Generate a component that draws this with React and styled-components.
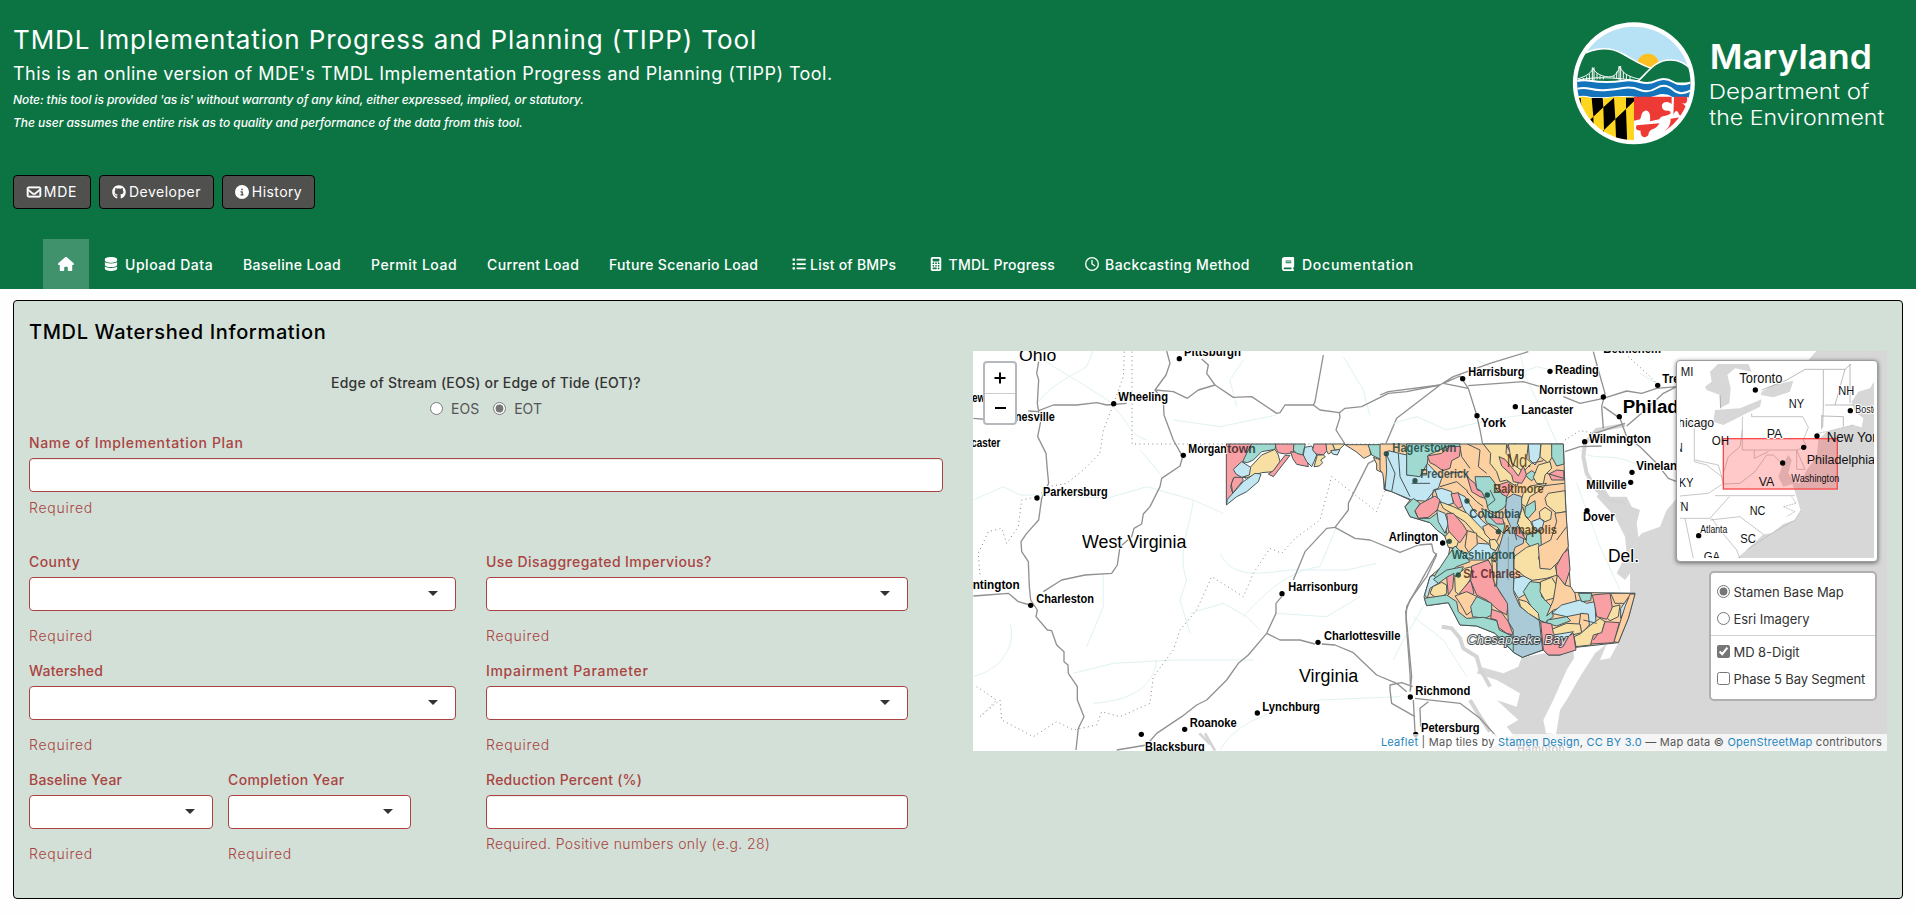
import React from "react";
import styled, { createGlobalStyle } from "styled-components";
import { FaRegEnvelope, FaGithub, FaCircleInfo, FaHouse, FaDatabase, FaListUl, FaCalculator, FaRegClock, FaBook } from "react-icons/fa6";

const GlobalStyle = createGlobalStyle`
  *, *::before, *::after { box-sizing: border-box; }
  body { margin: 0; background: #fefefe; font-family: Inter, "Open Sans", "Liberation Sans", sans-serif; font-size: 14px; color: #2c3e50; overflow: hidden; }
`;

const Page = styled.div`
  height: 915px;
  display: flex;
  flex-direction: column;
`;
const Header = styled.header`
  height: 289px;
  background: #0c7443;
  color: #fff;
  flex: none;
`;
const HeaderTop = styled.div`
  display: flex;
  justify-content: space-between;
  height: 175px;
`;
const Intro = styled.div`
  padding: 24px 0 0 13px;
  white-space: nowrap;
`;
const Title = styled.h1`
  margin: 0;
  font-size: 26px;
  font-weight: 400;
  line-height: 32px;
  letter-spacing: ${(p) => p.$ls}em;
`;
const Subtitle = styled.h2`
  margin: 6px 0 2px;
  font-size: 18px;
  font-weight: 400;
  line-height: 24px;
  letter-spacing: ${(p) => p.$ls}em;
`;
const Note = styled.p`
  margin: 0;
  font-size: 12px;
  font-style: italic;
  font-weight: 500;
  line-height: 23px;
  letter-spacing: ${(p) => p.$ls}em;
`;
const ButtonRow = styled.div`
  display: flex;
  gap: 8px;
  padding-left: 13px;
`;
const DarkButton = styled.button`
  height: 34px;
  width: ${(p) => p.$w}px;
  padding: 0 0 1px;
  display: flex;
  align-items: center;
  justify-content: center;
  gap: 3px;
  border: 1px solid #000;
  border-radius: 4px;
  background: #50504f;
  color: #fff;
  font: 400 14px Inter, sans-serif;
  letter-spacing: ${(p) => p.$ls}em;
  svg { font-size: 14px; stroke: currentColor; stroke-width: ${(p) => (p.$heavy ? 22 : 0)}px; overflow: visible; }
`;
const Nav = styled.nav`
  display: flex;
  margin-top: 30px;
  padding-left: 43px;
`;
const NavItem = styled.a`
  height: 50px;
  width: ${(p) => p.$w}px;
  display: flex;
  align-items: center;
  padding-left: 15px;
  gap: ${(p) => p.$gap || 5}px;
  white-space: nowrap;
  font-size: 14px;
  font-weight: 500;
  letter-spacing: ${(p) => p.$ls || 0}em;
  background: ${(p) => (p.$active ? "#3f926c" : "transparent")};
  svg { font-size: ${(p) => (p.$active ? 16 : 14)}px; flex: none; }
`;
const Well = styled.main`
  margin: 11px 13px 0;
  height: 599px;
  padding: 19px 15px 0;
  display: flex;
  gap: 30px;
  border: 1px solid #000;
  border-radius: 4px;
  background: #d3e0d7;
`;
const Form = styled.form`
  width: 914px;
  display: flex;
  flex-direction: column;
`;
const SectionTitle = styled.h3`
  margin: 0;
  line-height: 24px;
  font-size: 20px;
  font-weight: 500;
  color: #000;
  letter-spacing: 0.032em;
`;
const RadioBlock = styled.div`
  margin: 29px 0 15px;
  display: flex;
  flex-direction: column;
  align-items: center;
  gap: 5px;
`;
const RadioTitle = styled.div`
  font-weight: 500;
  line-height: 20px;
  color: #333;
  letter-spacing: 0.015em;
`;
const RadioRow = styled.div`
  display: flex;
  justify-content: center;
  gap: 14px;
  height: 20px;
`;
const Choice = styled.label`
  display: flex;
  align-items: center;
  gap: ${(p) => p.$gap}px;
  font-size: ${(p) => p.$size}px;
  letter-spacing: ${(p) => p.$ls || 0}em;
  color: ${(p) => p.$color};
  white-space: nowrap;
  input { margin: 0; width: 13px; height: 13px; accent-color: #767676; flex: none; }
`;
const Columns = styled.div`
  display: grid;
  grid-template-columns: 427px 422px;
  column-gap: 30px;
  row-gap: 15px;
  margin-top: ${(p) => p.$mt}px;
`;
const Years = styled.div`
  display: grid;
  grid-template-columns: 184px 183px;
  column-gap: 15px;
`;
const Field = styled.div`
  display: flex;
  flex-direction: column;
`;
const Label = styled.label`
  line-height: 20px;
  margin-bottom: 5px;
  font-weight: 500;
  color: #a94442;
  letter-spacing: ${(p) => p.$ls ?? 0.01}em;
`;
const Control = styled.div`
  height: 34px;
  display: flex;
  align-items: center;
  justify-content: flex-end;
  padding-right: 17px;
  border: 1px solid #a94442;
  border-radius: 4px;
  background: #fff;
  box-shadow: ${(p) => (p.$input ? "inset 0 1px 1px rgba(0,0,0,.08)" : "none")};
`;
const Caret = styled.span`
  width: 0;
  height: 0;
  border: 5px solid transparent;
  border-top-color: #333;
  border-bottom: 0;
  margin-bottom: 2px;
`;
const Help = styled.span`
  margin-top: ${(p) => p.$mt}px;
  line-height: 20px;
  font-weight: 300;
  color: #a94442;
  letter-spacing: ${(p) => p.$ls ?? 0.052}em;
`;
const MapFrame = styled.section`
  position: relative;
  width: 914px;
  height: 400px;
  margin-top: 31px;
  overflow: hidden;
  background: #fff;
`;
const ZoomBox = styled.div`
  position: absolute;
  left: 10px;
  top: 10px;
  width: 34px;
  height: 64px;
  border: 2px solid #b5b9bd;
  border-radius: 4px;
  background: #fff;
  display: grid;
  grid-template-rows: 30px 30px;
  svg { display: block; }
  span + span { border-top: 1px solid #ccc; }
`;
const MiniMap = styled.div`
  position: absolute;
  left: 703px;
  top: 9px;
  width: 202px;
  height: 202px;
  border-radius: 4px;
  border: 1px solid #9a9da0;
  box-shadow: 0 1px 4px rgba(0, 0, 0, 0.55);
  background: #fff;
  padding: 3px;
  svg { display: block; }
`;
const Layers = styled.div`
  position: absolute;
  left: 736px;
  top: 220px;
  width: 168px;
  height: 130px;
  border: 2px solid #b0b0b0;
  border-radius: 5px;
  background: #fff;
  display: flex;
  flex-direction: column;
  padding-top: 5px;
`;
const LayerRow = styled.div`
  height: 27px;
  display: flex;
  align-items: center;
  padding-left: 6px;
`;
const Separator = styled.div`
  height: 1px;
  margin: 3px 0 2px;
  background: #cfd4d6;
`;
const Attribution = styled.div`
  position: absolute;
  right: 0;
  bottom: 0;
  height: 17px;
  line-height: 17px;
  padding: 0 5px;
  font-size: 11px;
  color: #555;
  background: rgba(255, 255, 255, 0.75);
  white-space: nowrap;
  letter-spacing: 0.022em;
  em { font-style: normal; color: #1f86c0; }
`;

const SANS = '"Liberation Sans", Arial, sans-serif';

/* Text fitted between x and end, sitting on baseline y. */
function MapText({ x, end, y, size = 36.5, bold = true, halo = true, fill = "#000", stroke = "#fff", sw = 6, opacity = 1, italic, children }) {
  return (
    <text x={x} y={y} textLength={end - x} lengthAdjust="spacingAndGlyphs" fontSize={size} fontFamily={SANS} fontWeight={bold ? 700 : 400} fontStyle={italic ? "italic" : "normal"}
      fill={fill} opacity={opacity} stroke={halo ? stroke : "none"} strokeWidth={halo ? sw : 0} strokeLinejoin="round" paintOrder="stroke">{children}</text>
  );
}

const C = { r: "#f8a0a4", t: "#9fd9cf", b: "#c2e7f3", y: "#f8e0a4", o: "#fdd0a2", w: "#a9cad6" };

const WEST = [
  ["r", "799,312 875,312 860,345 845,385 855,412 820,415 812,440 820,465 799,490"],
  ["t", "875,312 948,312 945,328 905,335 880,360 862,368 848,365 860,340"],
  ["y", "945,328 955,345 960,365 940,395 905,398 855,415 868,385 905,345"],
  ["b", "820,388 845,365 872,382 868,405 845,412 828,402"],
  ["r", "814,432 822,412 845,412 850,420 818,460"],
  ["b", "799,495 802,478 850,425 885,400 903,402 895,425 860,455 830,470"],
  ["r", "946,312 1002,312 1000,338 975,342 955,338 948,325"],
  ["r", "960,365 975,346 990,346 940,410 925,402 940,392"],
  ["r", "992,335 1015,338 1040,345 1045,380 1010,373 998,355"],
  ["t", "1002,312 1036,312 1028,345 1010,340 1000,330"],
  ["b", "1034,322 1055,318 1070,345 1062,365 1055,380 1040,365 1030,345"],
  ["r", "1062,312 1098,312 1102,330 1090,345 1068,342 1058,330"],
  ["y", "1062,380 1072,345 1090,345 1096,350 1082,360 1088,368 1078,378"],
  ["o", "1098,312 1118,312 1125,330 1105,342 1100,332"],
  ["b", "1112,332 1140,328 1132,345 1118,342"],
  ["y", "1118,312 1155,312 1138,328 1125,330"],
  ["o", "1155,314 1228,314 1232,345 1212,355 1188,335"],
  ["t", "1224,314 1278,314 1278,345 1262,358 1235,345"],
  ["o", "1240,352 1262,360 1278,350 1282,385 1276,410 1288,425 1278,450 1272,448 1272,400 1250,390 1250,372"],
];

const EAST = [
  ["b", "18,345 25,332 80,345 80,405 140,405 140,368 185,415 175,445 160,450 155,485 95,480 35,455 15,448 20,390"],
  ["t", "80,312 240,312 238,322 205,318 145,345 142,370 120,410 80,405"],
  ["r", "142,348 185,340 210,318 242,320 238,350 215,362 210,385 188,392 165,375 150,368"],
  ["y", "310,312 380,312 378,340 430,395 410,440 380,420 360,425 350,395 330,370 332,340"],
  ["r", "380,318 405,312 424,318 418,335 390,335"],
  ["y", "385,312 445,312 440,355 455,370 430,395 395,370"],
  ["b", "445,312 482,312 480,350 465,375 448,358"],
  ["y", "483,312 515,312 520,345 505,370 480,350"],
  ["t", "515,312 550,312 552,372 530,378 515,350"],
  ["r", "357,350 375,358 400,388 415,408 430,378 440,405 425,430 400,425 395,405 365,378"],
  ["t", "437,405 455,392 474,405 455,422 445,415"],
  ["y", "460,412 475,375 510,365 515,385 495,405 490,432 470,430"],
  ["r", "507,402 530,390 551,392 552,420 515,420"],
  ["y", "430,460 450,438 500,430 485,448 450,470 438,500 420,490"],
  ["y", "505,460 555,452 558,515 530,520 500,495 495,475"],
  ["t", "436,500 465,482 467,510 445,535 434,525"],
  ["y", "478,515 495,502 515,515 512,538 495,545 480,535"],
  ["y", "428,500 437,530 452,545 462,572 440,585 420,570 412,550"],
  ["b", "455,545 480,535 492,545 485,570 465,572"],
  ["t", "440,585 482,572 484,620 455,625 438,605"],
  ["r", "262,412 285,430 292,450 310,455 315,475 300,470 275,455"],
  ["t", "285,410 330,410 345,430 350,450 380,468 378,485 400,465 370,505 345,520 325,510 318,480 305,455 290,445"],
  ["r", "355,435 385,425 398,440 380,470 365,462"],
  ["b", "165,450 185,445 215,455 220,490 195,497 175,480"],
  ["r", "213,462 235,458 242,475 250,498 235,505 222,490"],
  ["b", "235,460 255,470 280,510 305,540 322,555 318,575 290,560 262,525 248,500"],
  ["y", "180,485 220,500 262,520 315,575 350,605 325,610 290,585 255,545 215,520 190,505"],
  ["t", "305,505 350,530 375,550 370,580 350,560 320,548"],
  ["r", "328,530 368,535 372,552 350,552"],
  ["o", "308,560 325,552 362,580 350,605 335,602 315,582"],
  ["t", "75,500 100,475 120,490 105,515 115,535 150,535 170,520 195,560 205,595 170,570 150,548 90,530"],
  ["r", "105,512 120,492 165,468 180,480 172,510 145,532 115,535"],
  ["b", "170,510 195,520 205,550 195,580 175,545"],
  ["r", "200,520 220,520 250,555 262,575 240,608 215,590 205,570"],
  ["y", "195,590 208,575 235,605 228,625 205,622"],
  ["o", "262,572 290,580 292,615 268,640 255,620"],
  ["b", "215,625 262,640 295,610 325,612 350,640 320,660 270,660 245,645"],
  ["t", "205,645 225,618 248,640 270,665 230,680 205,700 165,728 162,710"],
  ["b", "150,710 162,705 175,730 150,745 142,775 134,765"],
  ["t", "160,718 200,690 250,680 240,705 200,712 175,730"],
  ["y", "150,760 158,740 185,727 200,735 200,760 175,778"],
  ["r", "200,712 222,700 218,745 205,765"],
  ["y", "224,712 255,685 276,680 270,720 238,765 226,755"],
  ["r", "238,760 272,720 282,760 270,768"],
  ["r", "275,678 325,660 335,680 340,720 362,760 385,790 380,825 355,810 320,780 290,765 272,722"],
  ["y", "328,600 345,598 356,615 348,632 332,625"],
  ["o", "335,650 350,670 352,720 345,740 338,700"],
  ["o", "225,768 260,755 292,770 285,805 260,825 240,790"],
  ["t", "272,800 290,770 335,790 335,825 315,835 278,830"],
  ["r", "335,808 365,818 385,845 400,885 380,880 355,862 350,840 332,835"],
  ["t", "133,775 200,765 230,785 235,815 260,835 310,832 350,842 358,870 400,890 402,938 345,880 290,858 240,855 205,788 140,797"],
  ["w", "380,475 400,462 425,470 425,505 412,550 432,585 430,610 405,622 400,640 402,760 420,800 478,842 488,930 427,952 400,937 400,870 385,845 382,790 350,740 352,640 370,580 392,560 375,520"],
  ["r", "412,558 432,590 440,600 418,590 402,580"],
  ["y", "402,650 440,622 475,610 482,635 475,655 495,685 525,675 532,705 500,715 450,722 402,685"],
  ["o", "475,620 512,600 530,545 525,520 558,515 565,620 535,665 512,688 480,685"],
  ["r", "528,680 550,640 565,628 570,690 555,735 530,705"],
  ["b", "402,715 430,708 455,720 440,760 415,775 400,750"],
  ["t", "430,755 450,725 480,728 485,770 515,800 520,830 495,848 478,840 448,790"],
  ["y", "415,778 440,785 475,820 478,840 445,820 422,800"],
  ["y", "482,725 515,712 532,740 520,775 495,782 480,755"],
  ["o", "532,705 555,735 572,740 585,760 590,790 520,810 500,828 520,780"],
  ["b", "515,820 545,795 600,780 620,790 645,785 648,850 630,858 610,820 560,830"],
  ["t", "595,760 635,760 632,782 605,785"],
  ["t", "502,840 560,830 572,842 530,858 500,850"],
  ["o", "602,820 625,822 628,855 605,880 598,850"],
  ["r", "637,765 690,760 698,810 680,838 650,830 645,800"],
  ["o", "692,760 765,760 735,790 705,790"],
  ["y", "698,800 720,795 715,830 690,842 682,835"],
  ["b", "722,805 745,772 740,800 722,835"],
  ["y", "510,870 560,850 600,852 605,878 575,885 520,885"],
  ["y", "582,890 600,882 632,855 660,835 675,845 665,880 632,915 588,920"],
  ["r", "640,885 665,878 675,845 718,848 702,908 632,912"],
  ["r", "482,845 515,852 520,880 545,900 580,880 588,930 540,945 505,945 490,930"],
  ["b", "520,885 580,875 560,895 535,900"],
  ["o", "735,800 750,762 765,762 745,835 715,908 702,905"],
];

const OUTLINE = "0,312 550,312 558,520 572,757 765,760 745,835 715,908 588,922 540,945 505,945 490,930 427,952 400,937 345,880 290,858 240,855 205,788 140,797 132,770 150,710 185,680 205,650 210,620 195,590 150,548 90,530 75,500 90,480 35,455 15,450 8,400 0,390";

function Shapes({ list }) {
  return list.map(([c, pts], i) => <polygon key={i} points={pts} fill={C[c]} />);
}

function BaseMap() {
  return (
    <svg width="914" height="400" viewBox="0 0 2742 1200">
      <rect width="2742" height="1200" fill="#fff" />
      {/* western half */}
      <g transform="translate(-39 -33)">
        <g fill="none" stroke="#e0f2f2" strokeWidth="3">
          <path d="M235,185 C280,130 330,110 380,80 L400,30 M250,60 L330,110 L380,140 L450,185 M460,200 C520,260 500,280 560,300 M640,240 L780,260 L950,225 M40,480 L130,440 L180,465 L260,465 L350,470 L440,475 L560,440 L700,480 L790,520" />
          <path d="M540,330 L600,400 M700,480 C690,560 650,640 680,720 L660,780 L690,880 M780,640 C820,720 900,700 990,690 L1160,690 L1250,670 M850,830 C930,740 1000,690 1080,680 L1130,560 M340,1000 L460,970 L640,960 L820,960 L880,960 M430,700 L430,800 L380,920" />
          <path d="M150,850 C170,920 120,990 40,1010 M590,960 C580,1040 520,1080 400,1090 M690,820 L790,790 L860,830 L900,870 M780,1230 C840,1130 960,1110 1080,1080 L1320,1070 M830,200 L810,120 L850,60 M1150,50 L1210,150 L1230,230 M950,820 L1100,830 L1200,770" />
        </g>
        <g fill="none" stroke="#888" strokeWidth="3" strokeDasharray="3 10">
          <path d="M516,35 V312 H1278" />
          <path d="M493,35 L490,110 L460,195 L430,270 L420,340 L370,390 L320,430 L265,440 L232,470 L185,480 L175,560 L140,610 L125,565 L85,575 L55,640 L60,710" />
          <path d="M50,1040 L110,1080 L60,1130 L120,1080 L125,1140 L220,1190 L290,1145 L340,1170 L410,1155 L425,1115 L480,1130 L570,1090 L580,1010 L640,930 L660,870 L710,810 L755,710 L850,770 L880,700 L930,625 L965,640 L1005,595 L1080,540 L1115,410 L1250,515 L1275,450" />
        </g>
        <g fill="none" stroke="#919191" strokeWidth="4" strokeLinejoin="round">
          <path d="M236,65 L230,100 L236,120 L232,190 L236,215 L242,245 L233,290 L258,340 L262,390 L266,430 L245,475 L236,540 L200,580 L183,605 L185,635 L205,665 L208,740 L212,780 L232,810 L228,830 L262,870 L275,872 L290,915 L312,935 L312,965 L324,975 L325,1000 L352,1040 L352,1080 L372,1130 L355,1165 L348,1230" />
          <path d="M236,212 L280,195 L350,195 L410,188 L440,195 L500,190 M205,213 L236,215 M40,235 L100,240" />
          <path d="M620,33 L630,70 L618,105 L585,150 L610,180 L612,225 L640,300 L668,350 L660,378 L605,415 L600,440 L570,500 L550,522 L545,552 L522,565 L515,590 L480,620 L472,675 L455,700 L375,705 L305,720 L250,755" />
          <path d="M585,150 L640,155 L682,175 L715,150 L765,135 L740,100 L745,75 L725,57 M765,135 L820,172 L875,170 L950,220 L960,218 L975,195 L1060,195 L1065,185 L1090,45" />
          <path d="M1060,195 L1080,210 L1138,218 L1140,232 L1128,270 L1155,312 M1138,218 L1155,205 L1205,200 L1285,160 L1340,155 L1440,135 M1440,135 L1310,235 L1278,310" />
          <path d="M1248,358 L1225,370 L1165,490 L1165,510 L1125,562 L1100,565 L1035,635 L1000,720 M965,770 L948,790 L948,820 L920,880 L865,945 L835,970 L800,1020 L740,1080 L710,1095 L665,1130 L590,1180 L560,1215 L470,1230" />
          <path d="M1125,562 L1185,595 L1230,600 L1320,637 L1375,615 L1415,612 L1420,635 L1430,645 M920,880 L960,900 L1020,900 L1065,912 M1085,912 L1125,915 L1180,938 L1250,1005 L1310,1030 L1340,1055" />
          <path d="M1430,645 L1400,710 L1350,780 L1337,815 L1355,1010 L1350,1055 M40,768 L80,765 L145,760 L175,785 L210,795" />
        </g>
        <path d="M735,1180 L765,1232 M718,1180 L750,1212" stroke="#d4d4d4" strokeWidth="8" />
      </g>
      {/* eastern half */}
      <g transform="translate(1221 -33)">
        <g fill="none" stroke="#e0f2f2" strokeWidth="3">
          <path d="M40,250 L110,230 L200,270 L330,240 L460,220 M290,60 L390,110 L470,80 L560,100 M420,40 L440,120 L500,240 L540,330 M600,330 C640,370 700,330 780,380 M590,430 L660,620 L720,750 M780,100 L860,150 M130,800 L70,900 L40,960 M100,830 L190,900 L260,1010" />
        </g>
        <path d="M895,470 L860,510 L840,560 L785,580 L775,592 L770,550 L780,510 L755,500 L740,470 L690,470 L670,440 L650,470 L705,530 L735,590 L740,640 L710,700 L735,720 L750,700 L750,757 L765,762 L745,840 L715,908 L690,955 L660,960 L680,912 L645,940 L600,1010 L560,1080 L540,1110 L520,1232 L1530,1232 L1530,20 L1320,20 L1260,90 L1120,150 Z" fill="#d7d7d7" />
        <path d="M425,952 L580,925 L582,955 L560,990 L520,1080 L490,1140 L498,1180 L525,1182 L520,1232 L320,1232 L400,1185 L380,1160 L415,1140 L350,1080 L410,1100 L420,1060 L350,1020 L290,1000 L300,980 L370,1000 L415,980 Z" fill="#d7d7d7" />
        <path d="M185,860 L215,865 L240,895 L250,925 L290,950 L300,985 L330,1040 M270,1080 L300,1130 L330,1175 M735,255 L650,270 L615,310 L610,350 L620,400 L650,450 L690,480 L735,490" fill="none" stroke="#d4d4d4" strokeWidth="12" strokeLinejoin="round" />
        <path d="M555,300 L600,272 L645,280 M745,50 L800,100 L830,130" fill="none" stroke="#888" strokeWidth="3" strokeDasharray="3 9" />
        <g fill="none" stroke="#919191" strokeWidth="4" strokeLinejoin="round">
          <path d="M445,35 L330,70 L220,110 L180,135 L25,155 L0,165 M265,145 L240,108 L190,130 L265,145 L290,225 L300,270 L308,312 M265,137 L430,125 L480,140 M550,170 L600,190 L670,175 L740,153 L785,160 L830,145 L890,140 M640,35 L655,90 L675,160 L665,200 L670,265 M670,200 L720,235 L740,290 M740,258 L790,215 L850,160 L890,140 M740,290 L780,320 L830,370 L865,415 L890,425 M555,335 L600,320 L665,318 M630,285 L735,250" />
          <path d="M170,640 L80,800 L78,840 L90,1000 L92,1050 M30,1050 L30,1035 L65,1028 L98,1040 M30,1050 L35,1090 L105,1130 M100,1080 L105,1175 M105,1075 L240,1090 L300,1135 L350,1190 M145,1085 L120,1105 L122,1160" />
        </g>
      </g>
      {/* watershed polygons */}
      <g transform="translate(-39 -33)" stroke="#4a5557" strokeWidth="3" strokeLinejoin="round">
        <Shapes list={WEST} />
      </g>
      <g transform="translate(1221 -33)" stroke="#4a5557" strokeWidth="3" strokeLinejoin="round">
        <polygon points={OUTLINE} fill={C.o} />
        <Shapes list={EAST} />
        <path d="M240,320 L245,350 L270,385 M300,330 L295,380 L320,400 M262,312 L300,330 M205,400 L250,395 L262,412 M180,440 L230,425 L265,455 M260,455 L290,485 L310,500 M455,370 L490,362 M500,400 L552,415 M470,440 L552,430 M560,560 L530,600 M20,345 L45,400 L35,455 M55,340 L60,410 L90,470 M95,430 L150,430 M140,480 L165,450 M400,560 L410,600 M330,450 L345,480 L320,500 M610,840 L650,850 M655,880 L640,900" fill="none" />
        <path d="M352,640 V720 M385,590 V720 M400,870 V938" fill="none" stroke="#6f8d98" strokeWidth="2" />
      </g>
      <g transform="translate(-39 -33)">
        <MapText x={177} end={289} y={62} size={52} bold={false}>Ohio</MapText>
        <MapText x={672} end={843} y={49}>Pittsburgh</MapText>
        <MapText x={475} end={624} y={184}>Wheeling</MapText>
        <MapText x={28} end={76} y={186}>lew</MapText>
        <MapText x={165} end={284} y={242}>nesville</MapText>
        <MapText x={34} end={121} y={322}>caster</MapText>
        <MapText x={685} end={800} y={338}>Morgan</MapText>
        <MapText x={802} end={887} y={338} halo={false} opacity={0.65}>town</MapText>
        <MapText x={249} end={443} y={467}>Parkersburg</MapText>
        <MapText x={366} end={679} y={625} size={54} bold={false}>West Virginia</MapText>
        <MapText x={38} end={179} y={747}>ntington</MapText>
        <MapText x={229} end={402} y={788}>Charleston</MapText>
        <MapText x={985} end={1194} y={754}>Harrisonburg</MapText>
        <MapText x={1092} end={1321} y={899}>Charlottesville</MapText>
        <MapText x={1017} end={1195} y={1026} size={54} bold={false}>Virginia</MapText>
        <MapText x={907} end={1080} y={1112}>Lynchburg</MapText>
        <MapText x={689} end={830} y={1161}>Roanoke</MapText>
        <MapText x={555} end={734} y={1233}>Blacksburg</MapText>
        {[[658, 56], [461, 191], [670, 346], [231, 474], [212, 796], [966, 761], [1074, 907], [892, 1119], [674, 1168], [544, 1183]].map(([x, y]) => <circle key={x} cx={x} cy={y} r="8" />)}
      </g>
      <g transform="translate(1221 -33)">
        <MapText x={265} end={433} y={109}>Harrisburg</MapText>
        <MapText x={525} end={656} y={101}>Reading</MapText>
        <MapText x={670} end={843} y={40}>Bethlehem</MapText>
        <MapText x={478} end={654} y={163}>Norristown</MapText>
        <MapText x={847} end={973} y={129}>Trenton</MapText>
        <MapText x={728} end={1058} y={219} size={56}>Philadelphia</MapText>
        <MapText x={424} end={580} y={221}>Lancaster</MapText>
        <MapText x={303} end={378} y={261}>York</MapText>
        <MapText x={627} end={813} y={310}>Wilmington</MapText>
        <MapText x={769} end={912} y={389}>Vineland</MapText>
        <MapText x={619} end={740} y={447}>Millville</MapText>
        <MapText x={609} end={704} y={543}>Dover</MapText>
        <MapText x={684} end={777} y={667} size={54} bold={false}>Del.</MapText>
        <MapText x={26} end={175} y={602}>Arlington</MapText>
        <MapText x={106} end={271} y={1064}>Richmond</MapText>
        <MapText x={123} end={299} y={1176}>Petersburg</MapText>
        <MapText x={411} end={555} y={1240} fill="#444">Hampton</MapText>
        <g opacity="0.78">
          <MapText x={37} end={229} y={335} halo={false} fill="#0b3b35">Hagerstown</MapText>
          <MapText x={121} end={267} y={414} halo={false} fill="#14343b">Frederick</MapText>
          <MapText x={380} end={454} y={380} size={54} bold={false} halo={false} fill="#3c2b08">Md.</MapText>
          <MapText x={340} end={491} y={459} halo={false} fill="#3c2b08">Baltimore</MapText>
          <MapText x={268} end={421} y={535} halo={false} fill="#14343b">Columbia</MapText>
          <MapText x={369} end={531} y={582} halo={false} fill="#3c2b08">Annapolis</MapText>
          <MapText x={215} end={406} y={656} halo={false} fill="#0b3b35">Washington</MapText>
          <MapText x={250} end={423} y={714} halo={false} fill="#4b1414">St. Charles</MapText>
        </g>
        <MapText x={262} end={560} y={913} size={39} italic bold={false} fill="#f2f2f2" stroke="#2b3436" sw={6} opacity={0.85}>Chesapeake Bay</MapText>
        {[[248, 116], [510, 94], [670, 171], [833, 136], [406, 200], [718, 230], [291, 227], [614, 305], [756, 397], [752, 427], [621, 512], [188, 609], [91, 1071], [107, 1183]].map(([x, y]) => <circle key={x} cx={x} cy={y} r="8" />)}
        {[[19, 341], [105, 422], [322, 465], [261, 483], [355, 575], [208, 604], [235, 705]].map(([x, y]) => <circle key={x} cx={x} cy={y} r="8" fill="#164038" opacity="0.85" />)}
      </g>
    </svg>
  );
}

function Overview() {
  return (
    <svg width="194" height="194" viewBox="120 72 582 582">
      <rect x="120" y="71" width="585" height="585" fill="#fff" />
      <g fill="#d7d7d7">
        <path d="M705,120 L690,145 L655,155 L635,185 L645,215 L670,235 L665,262 L640,255 L560,275 L535,300 L530,350 L500,390 L480,430 L455,425 L468,465 L482,512 L465,540 L430,552 L395,580 L370,583 L320,630 L290,656 H705 Z" />
        <path d="M235,71 H325 L335,95 L285,85 L262,105 L272,145 L268,190 L240,205 L240,165 L200,150 L195,140 L215,125 L210,95 Z" />
        <path d="M365,155 L400,135 L460,122 L450,155 L400,172 L362,165 Z M225,210 L300,205 L365,178 L360,200 L310,225 L250,255 L220,245 Z M145,240 L215,245 L205,265 L150,262 Z" />
        <path d="M430,370 L445,345 L455,360 L445,400 L465,430 L430,440 L415,410 Z" />
      </g>
      <g fill="none" stroke="#aaa" strokeWidth="2">
        <path d="M335,220 V230 H488 L505,262 L490,300 L500,320 L470,330 M307,230 V330 H470 M163,265 V365 L200,375 L245,410 L248,432 L205,460 L120,468 M165,360 L235,375 L252,432 L300,430 L345,395 L380,345 L400,345 L420,365 M307,270 L300,320 L265,350 L250,400 M225,467 H465 M120,535 H210 L268,470 M210,540 L300,530 L370,583 M215,535 L240,570 L290,630 L300,656 M135,535 L160,656 M343,330 V355 L385,335 M470,330 L495,388 H470 Z" />
        <path d="M365,150 L440,120 L495,88 H615 L635,71 M550,90 V195 L548,262 M615,88 L585,195 M555,195 H640 M548,228 L610,230 V260 M630,71 V190 M545,225 L545,268 M240,165 L242,205" stroke="#999" />
        <path d="M482,512 L465,540 L395,580 L320,630 M640,255 L560,275 L530,280 M455,470 L468,490 L430,500 L465,515 L440,530" strokeDasharray="6 2" />
      </g>
      <rect x="250" y="296" width="342" height="151" fill="#ff3c41" fillOpacity="0.28" stroke="#fb4a4b" strokeWidth="4" />
      {[["MI", 122, 160, 107, 36], ["Toronto", 298, 427, 130, 42], ["NY", 446, 492, 205, 39], ["NH", 595, 643, 164, 38], ["Boston", 646, 729, 220, 30], ["PA", 380, 427, 293, 39], ["OH", 215, 267, 314, 37], ["Chicago", 88, 222, 260, 39], ["New York", 560, 730, 306, 42], ["Philadelphia", 500, 705, 371, 41], ["IN", 98, 128, 335, 37], ["VA", 356, 403, 439, 39], ["KY", 117, 160, 440, 37], ["Washington", 454, 598, 425, 30], ["TN", 101, 145, 512, 37], ["NC", 329, 376, 524, 39], ["Atlanta", 181, 262, 578, 30], ["SC", 301, 348, 610, 39], ["GA", 191, 240, 664, 38]].map(([t, x, e, y, s]) => (
        <MapText key={t} x={x} end={e} y={y} size={s} bold={false} halo={!(x > 340 && y > 340 && y < 450) && t !== "OH" && t !== "New York"} fill="#111">{t}</MapText>
      ))}
      {[[346, 150], [631, 212], [531, 288], [491, 322], [428, 369], [176, 587]].map(([x, y]) => <circle key={x} cx={x} cy={y} r="8" />)}
    </svg>
  );
}

function Logo() {
  const f = { fill: "#fff", fontFamily: "Inter, sans-serif" };
  return (
    <svg width="376" height="160" viewBox="0 0 1128 480">
      <defs><clipPath id="seal"><circle cx="281.5" cy="250" r="170" /></clipPath></defs>
      <circle cx="281.5" cy="250" r="183" fill="#fff" />
      <g clipPath="url(#seal)">
        <rect x="100" y="60" width="370" height="190" fill="#b7e1f4" />
        <circle cx="324" cy="194" r="33" fill="#fdc023" />
        <path d="M100,185 C140,145 200,135 245,160 C285,182 310,200 345,208 L345,250 H100 Z" fill="#0f7444" stroke="#fff" strokeWidth="5" />
        <path d="M292,245 C325,215 345,180 390,180 C425,180 450,200 465,225 V250 H290 Z" fill="#0f7444" stroke="#fff" strokeWidth="5" />
        <path d="M100,240 C130,232 150,225 159,205 C170,228 205,235 220,228 C230,222 236,212 239,200 C250,225 275,232 300,238 M100,243 C160,228 230,232 300,244 M157,242 V202 M162,242 V202 M237,240 V198 M242,240 V198 M130,234 V240 M140,229 V240 M148,222 V240 M171,220 V238 M180,226 V238 M190,230 V238 M222,226 V236 M230,215 V236 M250,216 V236 M259,223 V238 M270,229 V238" fill="none" stroke="#fff" strokeWidth="3" />
        <path d="M100,246 Q125,238 150,242 T200,246 T250,242 T300,246 T350,242 T400,246 T465,242 V295 H100 Z" fill="#1373bb" stroke="#fff" strokeWidth="6" />
        <path d="M100,270 Q125,260 150,266 T200,270 T250,264 T300,270 T350,264 T400,270 T465,264" fill="none" stroke="#fff" strokeWidth="6" />
        <path d="M100,292 Q125,284 150,290 T200,292 T250,288 T300,292 T350,286 T400,292 T465,288 V440 H100 Z" fill="#fff" />
        <path d="M100,294 Q125,287 150,293 T200,294 T250,291 L282,292 V440 H100 Z" fill="#fed61f" />
        <path d="M155,294 H188 L190,322 L160,350 Z M162,418 L192,390 V440 H162 Z M190,322 L222,293 L226,357 L192,390 Z M226,357 L258,327 L262,440 H229 Z M258,293 H282 V304 L258,327 Z M130,378 L160,350 L162,418 L135,440 Z M108,294 H122 L130,378 L108,398 Z" fill="#000" />
        <path d="M282,290 H395 V312 C375,298 360,312 368,326 C378,338 392,325 392,340 C384,350 362,345 358,358 L330,364 C333,340 325,330 316,332 C302,335 306,350 300,358 L282,362 Z M402,290 H440 C446,305 436,315 426,308 L440,322 C435,345 420,355 415,338 C408,325 400,340 400,350 Z M290,376 L358,370 C345,395 330,380 325,405 C315,418 300,410 302,392 C292,392 284,388 290,376 Z M392,356 L430,350 C418,364 408,360 408,378 L390,398 C382,385 372,405 362,402 C382,388 392,378 392,356 Z" fill="#ed3a34" />
      </g>
      <text {...f} x="509" y="208" fontSize="101" fontWeight="600" textLength="487" lengthAdjust="spacingAndGlyphs">Maryland</text>
      <text {...f} x="506" y="298" fontSize="62" fontWeight="300" textLength="482" lengthAdjust="spacingAndGlyphs">Department of</text>
      <text {...f} x="508" y="374" fontSize="62" fontWeight="300" textLength="525" lengthAdjust="spacingAndGlyphs">the Environment</text>
    </svg>
  );
}

/* icon, label, tab width, letter spacing, icon gap */
const NAV = [
  [FaDatabase, "Upload Data", 139, 0.038, 7],
  [null, "Baseline Load", 128, 0.025],
  [null, "Permit Load", 116, 0.038],
  [null, "Current Load", 122, 0.027],
  [null, "Future Scenario Load", 182.5, 0.024],
  [FaListUl, "List of BMPs", 137, 0.017, 4.5],
  [FaCalculator, "TMDL Progress", 156.5, 0.018, 6],
  [FaRegClock, "Backcasting Method", 196, 0.032, 6],
  [FaBook, "Documentation", 150, 0.054, 7],
];

function SelectField({ label, ls, hint = "Required" }) {
  return (
    <Field>
      <Label $ls={ls}>{label}</Label>
      <Control><Caret /></Control>
      <Help $mt={15}>{hint}</Help>
    </Field>
  );
}

export default function App() {
  return (
    <Page>
      <GlobalStyle />
      <Header>
        <HeaderTop>
          <Intro>
            <Title $ls={0.0347}>TMDL Implementation Progress and Planning (TIPP) Tool</Title>
            <Subtitle $ls={0.025}>This is an online version of MDE's TMDL Implementation Progress and Planning (TIPP) Tool.</Subtitle>
            <Note $ls={-0.007}>Note: this tool is provided 'as is' without warranty of any kind, either expressed, implied, or statutory.</Note>
            <Note $ls={-0.003}>The user assumes the entire risk as to quality and performance of the data from this tool.</Note>
          </Intro>
          <Logo />
        </HeaderTop>
        <ButtonRow>
          <DarkButton $w={78} $ls={0.05} $heavy><FaRegEnvelope />MDE</DarkButton>
          <DarkButton $w={115} $ls={0.035}><FaGithub />Developer</DarkButton>
          <DarkButton $w={93} $ls={0.03}><FaCircleInfo />History</DarkButton>
        </ButtonRow>
        <Nav>
          <NavItem $active $w={46}><FaHouse /></NavItem>
          {NAV.map(([Icon, text, w, ls, gap]) => (
            <NavItem key={text} $w={w} $ls={ls} $gap={gap}>{Icon && <Icon />}{text}</NavItem>
          ))}
        </Nav>
      </Header>
      <Well>
        <Form>
          <SectionTitle>TMDL Watershed Information</SectionTitle>
          <RadioBlock>
            <RadioTitle>Edge of Stream (EOS) or Edge of Tide (EOT)?</RadioTitle>
            <RadioRow>
              <Choice $gap={8} $size={14} $color="#555"><input type="radio" name="edge" />EOS</Choice>
              <Choice $gap={8} $size={14} $color="#555"><input type="radio" name="edge" defaultChecked />EOT</Choice>
            </RadioRow>
          </RadioBlock>
          <Field>
            <Label $ls={0.047}>Name of Implementation Plan</Label>
            <Control $input />
            <Help $mt={6}>Required</Help>
          </Field>
          <Columns $mt={34}>
            <SelectField label="County" ls={0.03} />
            <SelectField label="Use Disaggregated Impervious?" ls={0.03} />
            <SelectField label="Watershed" ls={0.014} />
            <SelectField label="Impairment Parameter" ls={0.049} />
            <Years>
              <SelectField label="Baseline Year" ls={0.014} />
              <SelectField label="Completion Year" ls={0.028} />
            </Years>
            <Field>
              <Label $ls={0.018}>Reduction Percent (%)</Label>
              <Control $input />
              <Help $mt={5} $ls={0.027}>Required. Positive numbers only (e.g. 28)</Help>
            </Field>
          </Columns>
        </Form>
        <MapFrame>
          <BaseMap />
          <ZoomBox>
            <span><svg width="30" height="30"><path d="M9.5,15 H20.5 M15,9.5 V20.5" stroke="#000" strokeWidth="2" /></svg></span>
            <span><svg width="30" height="30"><path d="M10,14 H21" stroke="#000" strokeWidth="2" /></svg></span>
          </ZoomBox>
          <MiniMap><Overview /></MiniMap>
          <Layers>
            <LayerRow><Choice $gap={3.5} $size={13} $ls={-0.005} $color="#333"><input type="radio" name="base" defaultChecked />Stamen Base Map</Choice></LayerRow>
            <LayerRow><Choice $gap={3.5} $size={13} $ls={-0.005} $color="#333"><input type="radio" name="base" />Esri Imagery</Choice></LayerRow>
            <Separator />
            <LayerRow><Choice $gap={3.5} $size={13} $ls={-0.005} $color="#333"><input type="checkbox" defaultChecked />MD 8-Digit</Choice></LayerRow>
            <LayerRow><Choice $gap={3.5} $size={13} $ls={-0.011} $color="#333"><input type="checkbox" />Phase 5 Bay Segment</Choice></LayerRow>
          </Layers>
          <Attribution><em>Leaflet</em> | Map tiles by <em>Stamen Design</em>, <em>CC BY 3.0</em> — Map data © <em>OpenStreetMap</em> contributors</Attribution>
        </MapFrame>
      </Well>
    </Page>
  );
}
